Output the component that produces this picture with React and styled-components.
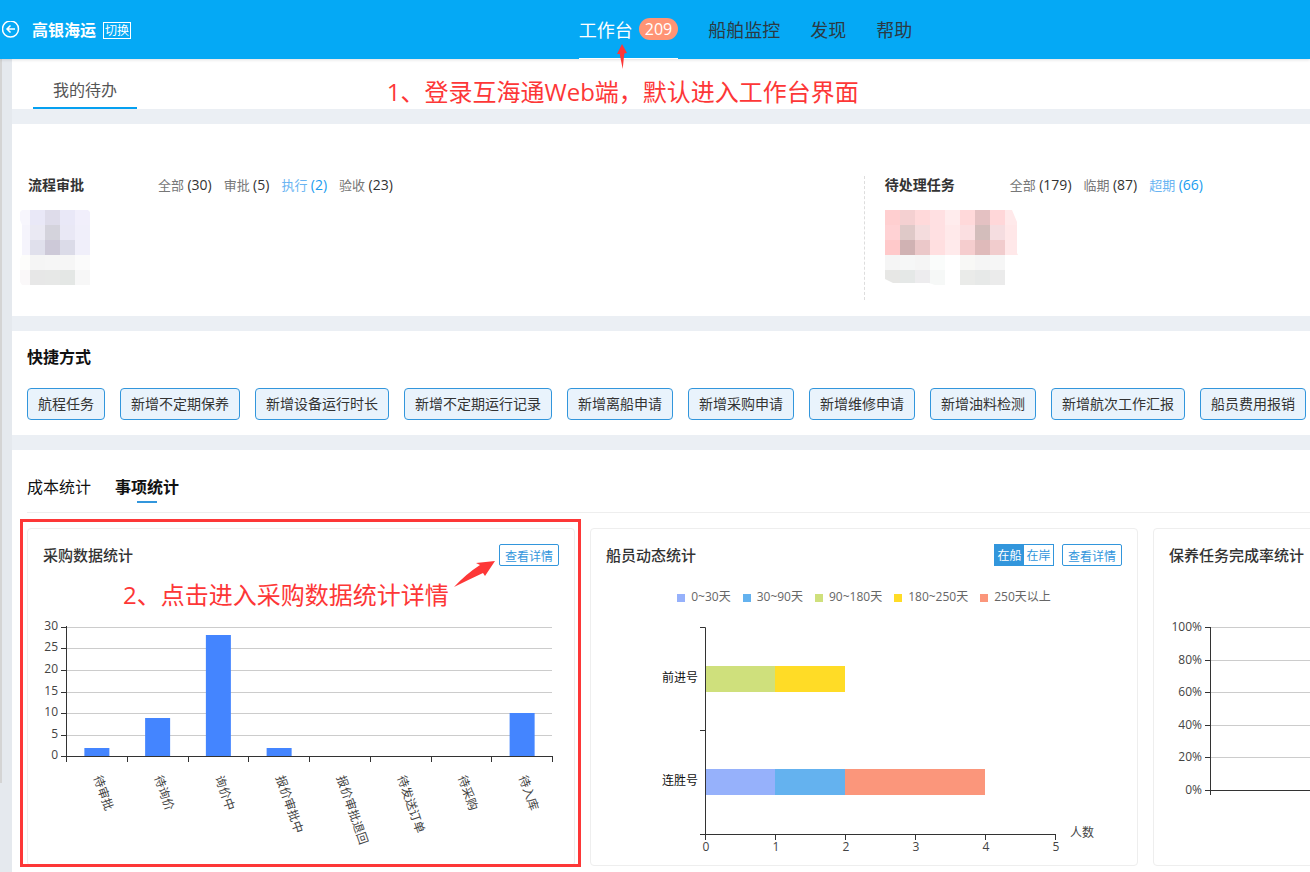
import React from "react";
import styled, { createGlobalStyle } from "styled-components";

const GlobalStyle = createGlobalStyle`
  * {
    box-sizing: border-box;
  }

  body {
    margin: 0;
    overflow-x: hidden;
    background-color: #ebeff4;
    color: #333;
    font-family: "Open Sans", "Noto Sans CJK SC", sans-serif;
    font-size: 14px;
  }

  button {
    padding: 0;
    border: none;
    background: none;
    color: inherit;
    font: inherit;
    white-space: nowrap;
    cursor: pointer;
  }

  a {
    color: inherit;
    text-decoration: none;
  }

  h2, h3 {
    margin: 0;
  }
`;

const Header = styled.header`
  position: relative;
  z-index: 2;
  display: flex;
  height: 59px;
  padding-left: 2px;
  background-color: #05a9f5;
  box-shadow: 0 1px 3px rgba(0, 0, 0, 0.12);
`;

const Brand = styled.div`
  display: flex;
  flex: 0 0 44.1%;
  align-items: center;
  color: #fff;

  strong {
    margin: 0 7px 0 12px;
    font-size: 16px;
    line-height: 24px;
  }
`;

const BackButton = styled.button`
  display: flex;
  svg {
    display: block;
  }
`;

const SwitchButton = styled.button`
  height: 17px;
  margin-top: 2px;
  padding: 0 1px;
  border: 1px solid #fff;
  font-size: 12px;
  line-height: 15px;
`;

const Nav = styled.nav`
  display: flex;
  gap: 30px;
`;

const NavItem = styled.div`
  position: relative;
  display: flex;
  align-items: center;
  height: 59px;
  border-bottom: 1px solid ${(p) => (p.$active ? "#fff" : "transparent")};
  color: ${(p) => (p.$active ? "#fff" : "#2b3a44")};
  font-size: 18px;
  white-space: nowrap;

  a {
    display: flex;
    gap: 6px;
    align-items: center;
  }
`;

const Badge = styled.span`
  height: 22px;
  padding: 0 6px;
  border-radius: 11px;
  background-color: #ff9475;
  font-size: 16px;
  font-weight: 500;
  line-height: 22px;
`;

const Note = styled.div`
  position: absolute;
  left: ${(p) => p.$left}px;
  top: ${(p) => p.$top}px;
  color: #fd3737;
  font-size: 24px;
  line-height: 32px;
  white-space: nowrap;
  pointer-events: none;
`;

const Arrow = styled.svg`
  position: absolute;
  left: ${(p) => p.$left}px;
  top: ${(p) => p.$top}px;
  fill: #fd3737;
  pointer-events: none;
`;

const Shell = styled.div`
  display: flex;
  min-height: calc(100vh - 59px);
`;

const Rail = styled.div`
  flex: 0 0 12px;
  background-color: #e5e9ee;

  &::before {
    content: "";
    display: block;
    width: 2px;
    height: 89%;
    background-color: #d4d4d4;
  }
`;

const Main = styled.main`
  display: flex;
  flex: 1;
  flex-direction: column;
  gap: 15px;
  min-width: 0;
`;

const Section = styled.section`
  padding: ${(p) => p.$padding};
  overflow-x: clip;
  background-color: #fff;
`;

const TodoTabs = styled.div`
  display: flex;
  height: 50px;
  padding-left: 21px;
  background-color: #fff;
`;

const TodoTab = styled.button`
  padding: 12px 20px 0;
  border-bottom: 2px solid #05a0f0;
  color: #555;
  font-size: 16px;
`;

const Columns = styled.div`
  display: grid;
  grid-template-columns: 21fr 11fr;
`;

const Panel = styled.div`
  padding: 0 0 15px ${(p) => (p.$divided ? 20 : 8)}px;
  border-left: ${(p) => (p.$divided ? "1px dashed #ddd" : "none")};

  svg {
    display: block;
    margin-top: 16px;
  }
`;

const PanelHead = styled.div`
  display: flex;
  padding-left: ${(p) => (p.$inset ? 8 : 0)}px;
  line-height: 18px;

  h3 {
    flex: 0 0 ${(p) => (p.$inset ? 130 : 125)}px;
    font-size: 14px;
  }
`;

const Counts = styled.div`
  display: flex;
  gap: 12px;
  font-size: 13px;
`;

const Count = styled.a`
  color: ${(p) => (p.$active ? "#6ab4f2" : "#777")};

  span {
    color: ${(p) => (p.$active ? "#1a9cf0" : "#333")};
    font-size: 14px;
  }
`;

const SectionTitle = styled.h2`
  margin-bottom: 20px;
  color: #111;
  font-size: 16px;
  font-weight: 600;
  line-height: 22px;
`;

const Shortcuts = styled.div`
  display: flex;
  flex-wrap: wrap;
  gap: 15px;
`;

const ShortcutButton = styled.button`
  height: 32px;
  padding: 0 10px;
  border: 1px solid #3296dc;
  border-radius: 4px;
  background-color: #e9f3fc;
  line-height: 30px;
`;

const StatTabs = styled.div`
  display: flex;
  gap: 24px;
  height: 39px;
  margin-bottom: 15px;
  border-bottom: 1px solid #eee;
`;

const StatTab = styled.button`
  display: flex;
  flex-direction: column;
  align-items: center;
  color: #111;
  font-size: 16px;
  font-weight: ${(p) => (p.$active ? 700 : 400)};
  line-height: 27px;

  &::after {
    content: "";
    width: 20px;
    height: 2px;
    background-color: ${(p) => (p.$active ? "#3296dc" : "transparent")};
  }
`;

const Cards = styled.div`
  display: flex;
  gap: 15px;
`;

const Card = styled.article`
  position: relative;
  flex: 1 0 548px;
  padding: 15px;
  border: 1px solid #eee;
  border-radius: 4px;
`;

const CardHead = styled.div`
  display: flex;
  gap: 8px;
  height: 22px;
  line-height: 22px;

  h3 {
    flex: 1;
    font-size: 15px;
    font-weight: 500;
  }
`;

const DetailButton = styled.button`
  width: 60px;
  padding-top: 3px;
  border: 1px solid #3296dc;
  border-radius: 2px;
  color: #3296dc;
  font-size: 12px;
  line-height: 17px;
`;

const Toggle = styled.div`
  display: flex;
  width: 60px;
  border: 1px solid #3296dc;
`;

const ToggleButton = styled.button`
  flex: 1;
  padding-top: 2px;
  background-color: ${(p) => (p.$active ? "#3296dc" : "#fff")};
  color: ${(p) => (p.$active ? "#fff" : "#3296dc")};
  font-size: 12px;
  line-height: 18px;
`;

const Highlight = styled.div`
  position: absolute;
  inset: -10px -7px -2px -8px;
  border: 3px solid #fd3737;
  pointer-events: none;
`;

const Legend = styled.div`
  display: flex;
  gap: 12px;
  justify-content: center;
  margin-top: 21px;
  color: #666;
  font-size: 12px;
  line-height: 20px;
`;

const LegendItem = styled.span`
  display: flex;
  gap: 6px;
  align-items: center;

  &::before {
    content: "";
    width: 8px;
    height: 8px;
    margin-top: 2px;
    background-color: ${(p) => p.$color};
  }
`;

const Chart = styled.svg`
  display: block;
  width: 100%;
  height: auto;
  overflow: visible;

  text {
    fill: #444;
    font-size: 12px;
  }

  .axis {
    fill: none;
    stroke: #333;
  }

  .grid {
    stroke: #ccc;
  }

  .category {
    fill: #111;
  }
`;

const approvalCounts = [
  { label: "全部", count: 30 },
  { label: "审批", count: 5 },
  { label: "执行", count: 2, active: true },
  { label: "验收", count: 23 },
];

const taskCounts = [
  { label: "全部", count: 179 },
  { label: "临期", count: 87 },
  { label: "超期", count: 66, active: true },
];

const approvalCells = [
  ["#f7f6fd", "#e9e8f7", "#dedcea", "#e9e8f7", "#f1effb"],
  ["#f5f4fc", "#eae9f3", "#d4d3dc", "#e9e8f5", "#f0effa"],
  ["#f5f4fc", "#e0e0ec", "#cdc9d8", "#dbdbe8", "#f0effa"],
  ["#fdfdfb", "#f5f5f5", "#f6f6f6", "#f6f6f6", "#fbfbfb"],
  ["#faf8f9", "#e7e7e7", "#e7e8e7", "#e4e7e5", "#f7f7f7"],
];

const taskCells = [
  ["#ffcfd0", "#f4d0d1", "#ffd9da", "#ffe0e2", "#ffeced", "#ffd9da", "#e4c1c2", "#ffd7d9", "#ffe9ea"],
  ["#ffd2d4", "#dfc9c8", "#f4dcdd", "#ffe0e2", "#ffe9ea", "#fbdfe1", "#d3bdbb", "#f5dde0", "#ffe7e8"],
  ["#ffc9ca", "#d0b2b3", "#ebc8c9", "#ffdfe0", "#ffeaeb", "#f5cdce", "#dfbaba", "#f1cccd", "#ffe8e9"],
  ["#f5f5f5", "#f6f7f7", "#f5f5f5", "#fafcfb", "#fff", "#f8f8f6", "#f5f5f5", "#f6f6f6", "#fff"],
  ["#e7e7e5", "#e5e8e7", "#edecee", "#f6f8f7", "#fff", "#eaebe9", "#e7e9e8", "#ebebeb", "#fff"],
];

const shortcuts = [
  "航程任务",
  "新增不定期保养",
  "新增设备运行时长",
  "新增不定期运行记录",
  "新增离船申请",
  "新增采购申请",
  "新增维修申请",
  "新增油料检测",
  "新增航次工作汇报",
  "船员费用报销",
];

const purchases = [
  { name: "待审批", value: 2 },
  { name: "待询价", value: 9 },
  { name: "询价中", value: 28 },
  { name: "报价审批中", value: 2 },
  { name: "报价审批退回", value: 0 },
  { name: "待发送订单", value: 0 },
  { name: "待采购", value: 0 },
  { name: "待入库", value: 10 },
];

const periods = [
  { name: "0~30天", color: "#96b1fb" },
  { name: "30~90天", color: "#64b2ef" },
  { name: "90~180天", color: "#cfe07c" },
  { name: "180~250天", color: "#ffdc26" },
  { name: "250天以上", color: "#fb967b" },
];

const ships = [
  { name: "前进号", y: 59, crew: [0, 0, 1, 1, 0] },
  { name: "连胜号", y: 162, crew: [1, 1, 0, 0, 2] },
];

function CountList({ items }) {
  return (
    <Counts>
      {items.map((item) => (
        <Count key={item.label} href="#" $active={item.active}>
          {item.label} <span>({item.count})</span>
        </Count>
      ))}
    </Counts>
  );
}

// Blurred-out names, drawn as 15px blocks clipped to a rough outline
function Mosaic({ id, cells, offset, width, outline }) {
  return (
    <svg width={width} height="75" aria-hidden="true">
      <clipPath id={id}>
        <path d={outline} />
      </clipPath>
      <g clipPath={`url(#${id})`} shapeRendering="crispEdges">
        {cells.map((row, r) =>
          row.map((color, c) => (
            <rect
              key={`${r}-${c}`}
              x={c * 15 - offset}
              y={r * 15}
              width="15"
              height="15"
              fill={color}
            />
          ))
        )}
      </g>
    </svg>
  );
}

function PurchaseChart() {
  const left = 23;
  const bottom = 190;
  const step = 486 / 8;
  const toY = (value) => Math.round(bottom + 0.4 - value * 4.32);

  return (
    <Chart viewBox="0 0 516 284">
      {[0, 5, 10, 15, 20, 25, 30].map((value) => (
        <g key={value}>
          {value > 0 && (
            <path className="grid" d={`M${left} ${toY(value) + 0.5}H509`} />
          )}
          <path className="axis" d={`M${left - 5} ${toY(value) + 0.5}h5`} />
          <text x="15" y={toY(value) + 3} textAnchor="end">
            {value}
          </text>
        </g>
      ))}
      {purchases.map((item, i) => {
        const center = left + step * (i + 0.5);
        return (
          <g key={item.name}>
            <rect
              x={center - 12}
              y={toY(item.value)}
              width="25"
              height={bottom - toY(item.value)}
              fill="#4485ff"
            />
            <text
              transform={`translate(${center + 1} 210) rotate(71)`}
              dy="4"
            >
              {item.name}
            </text>
          </g>
        );
      })}
      <path className="axis" d={`M${left + 0.5} 60V190.5H510`} />
      {[0, 1, 2, 3, 4, 5, 6, 7, 8].map((i) => (
        <path
          key={i}
          className="axis"
          d={`M${Math.round(left + step * i) + 0.5} 190v6`}
        />
      ))}
    </Chart>
  );
}

function CrewChart() {
  const left = 99;
  const unit = 70;

  return (
    <Chart viewBox="0 0 516 243">
      {ships.map((ship) => {
        let total = 0;
        return (
          <g key={ship.name}>
            <text
              className="category"
              x={left - 7}
              y={ship.y + 16}
              textAnchor="end"
            >
              {ship.name}
            </text>
            {ship.crew.map((count, i) => {
              const x = left + total * unit;
              total += count;
              return (
                <rect
                  key={periods[i].name}
                  x={x}
                  y={ship.y}
                  width={count * unit}
                  height="26"
                  fill={periods[i].color}
                />
              );
            })}
          </g>
        );
      })}
      <path
        className="axis"
        d="M94 20.5h5.5V227.5H450M94 123.5h5.5M94 227.5h5.5"
      />
      {[0, 1, 2, 3, 4, 5].map((value) => (
        <g key={value}>
          <path className="axis" d={`M${left + value * unit + 0.5} 227v6`} />
          <text x={left + value * unit + 1} y="244" textAnchor="middle">
            {value}
          </text>
        </g>
      ))}
      <text x="464" y="230">
        人数
      </text>
    </Chart>
  );
}

function MaintenanceChart() {
  return (
    <Chart viewBox="0 0 516 284">
      {[0, 20, 40, 60, 80, 100].map((value) => {
        const y = Math.round(224 - value * 1.63) + 0.5;
        return (
          <g key={value}>
            <path className={value ? "grid" : "axis"} d={`M41 ${y}H510`} />
            <path className="axis" d={`M36 ${y}h5`} />
            <text x="33" y={y + 3} textAnchor="end">
              {value}%
            </text>
          </g>
        );
      })}
      <path className="axis" d="M41.5 61V229" />
    </Chart>
  );
}

export default function App() {
  return (
    <>
      <GlobalStyle />
      <Header>
        <Brand>
          <BackButton aria-label="返回">
            <svg
              width="18"
              height="18"
              viewBox="0 0 18 18"
              fill="none"
              stroke="#fff"
              strokeWidth="1.5"
            >
              <circle cx="8.5" cy="8" r="8" />
              <path d="M13 8H5M8.5 4.5L5 8L8.5 11.5" />
            </svg>
          </BackButton>
          <strong>高银海运</strong>
          <SwitchButton>切换</SwitchButton>
        </Brand>
        <Nav>
          <NavItem $active>
            <a href="#">
              工作台 <Badge>209</Badge>
            </a>
            <Arrow $left={38} $top={44} width="10" height="25">
              <path d="M5 0L10 9L7.3 9.5L5.7 25L2.7 10L0 10Z" />
            </Arrow>
            <Note $left={-192} $top={76}>
              1、登录互海通Web端，默认进入工作台界面
            </Note>
          </NavItem>
          <NavItem>
            <a href="#">船舶监控</a>
          </NavItem>
          <NavItem>
            <a href="#">发现</a>
          </NavItem>
          <NavItem>
            <a href="#">帮助</a>
          </NavItem>
        </Nav>
      </Header>
      <Shell>
        <Rail />
        <Main>
          <TodoTabs>
            <TodoTab>我的待办</TodoTab>
          </TodoTabs>
          <Section $padding="52px 0 16px">
            <Columns>
              <Panel $divided={false}>
                <PanelHead $inset>
                  <h3>流程审批</h3>
                  <CountList items={approvalCounts} />
                </PanelHead>
                <Mosaic
                  id="approval"
                  cells={approvalCells}
                  offset={5}
                  width={70}
                  outline="M2 0H68L70 2V75H2L0 72V49L2 45V15L0 10V2Z"
                />
              </Panel>
              <Panel $divided>
                <PanelHead>
                  <h3>待处理任务</h3>
                  <CountList items={taskCounts} />
                </PanelHead>
                <Mosaic
                  id="task"
                  cells={taskCells}
                  offset={0}
                  width={133}
                  outline="M0 0H127L132 12V43L133 45H120V75H50L44 73H8L0 69Z"
                />
              </Panel>
            </Columns>
          </Section>
          <Section $padding="15px 0 15px 15px">
            <SectionTitle>快捷方式</SectionTitle>
            <Shortcuts>
              {shortcuts.map((name) => (
                <ShortcutButton key={name}>{name}</ShortcutButton>
              ))}
            </Shortcuts>
          </Section>
          <Section $padding="24px 0 6px 15px">
            <StatTabs>
              <StatTab>成本统计</StatTab>
              <StatTab $active>事项统计</StatTab>
            </StatTabs>
            <Cards>
              <Card>
                <CardHead>
                  <h3>采购数据统计</h3>
                  <DetailButton>查看详情</DetailButton>
                </CardHead>
                <PurchaseChart />
                <Highlight />
                <Note $left={95} $top={50}>
                  2、点击进入采购数据统计详情
                </Note>
                <Arrow $left={426} $top={32} width="42" height="26">
                  <path d="M41 0L22 2L26 4Q12 13 0 26Q14 19 29 12L31 15Z" />
                </Arrow>
              </Card>
              <Card>
                <CardHead>
                  <h3>船员动态统计</h3>
                  <Toggle>
                    <ToggleButton $active>在船</ToggleButton>
                    <ToggleButton>在岸</ToggleButton>
                  </Toggle>
                  <DetailButton>查看详情</DetailButton>
                </CardHead>
                <Legend>
                  {periods.map((period) => (
                    <LegendItem key={period.name} $color={period.color}>
                      {period.name}
                    </LegendItem>
                  ))}
                </Legend>
                <CrewChart />
              </Card>
              <Card>
                <CardHead>
                  <h3>保养任务完成率统计</h3>
                </CardHead>
                <MaintenanceChart />
              </Card>
            </Cards>
          </Section>
        </Main>
      </Shell>
    </>
  );
}
